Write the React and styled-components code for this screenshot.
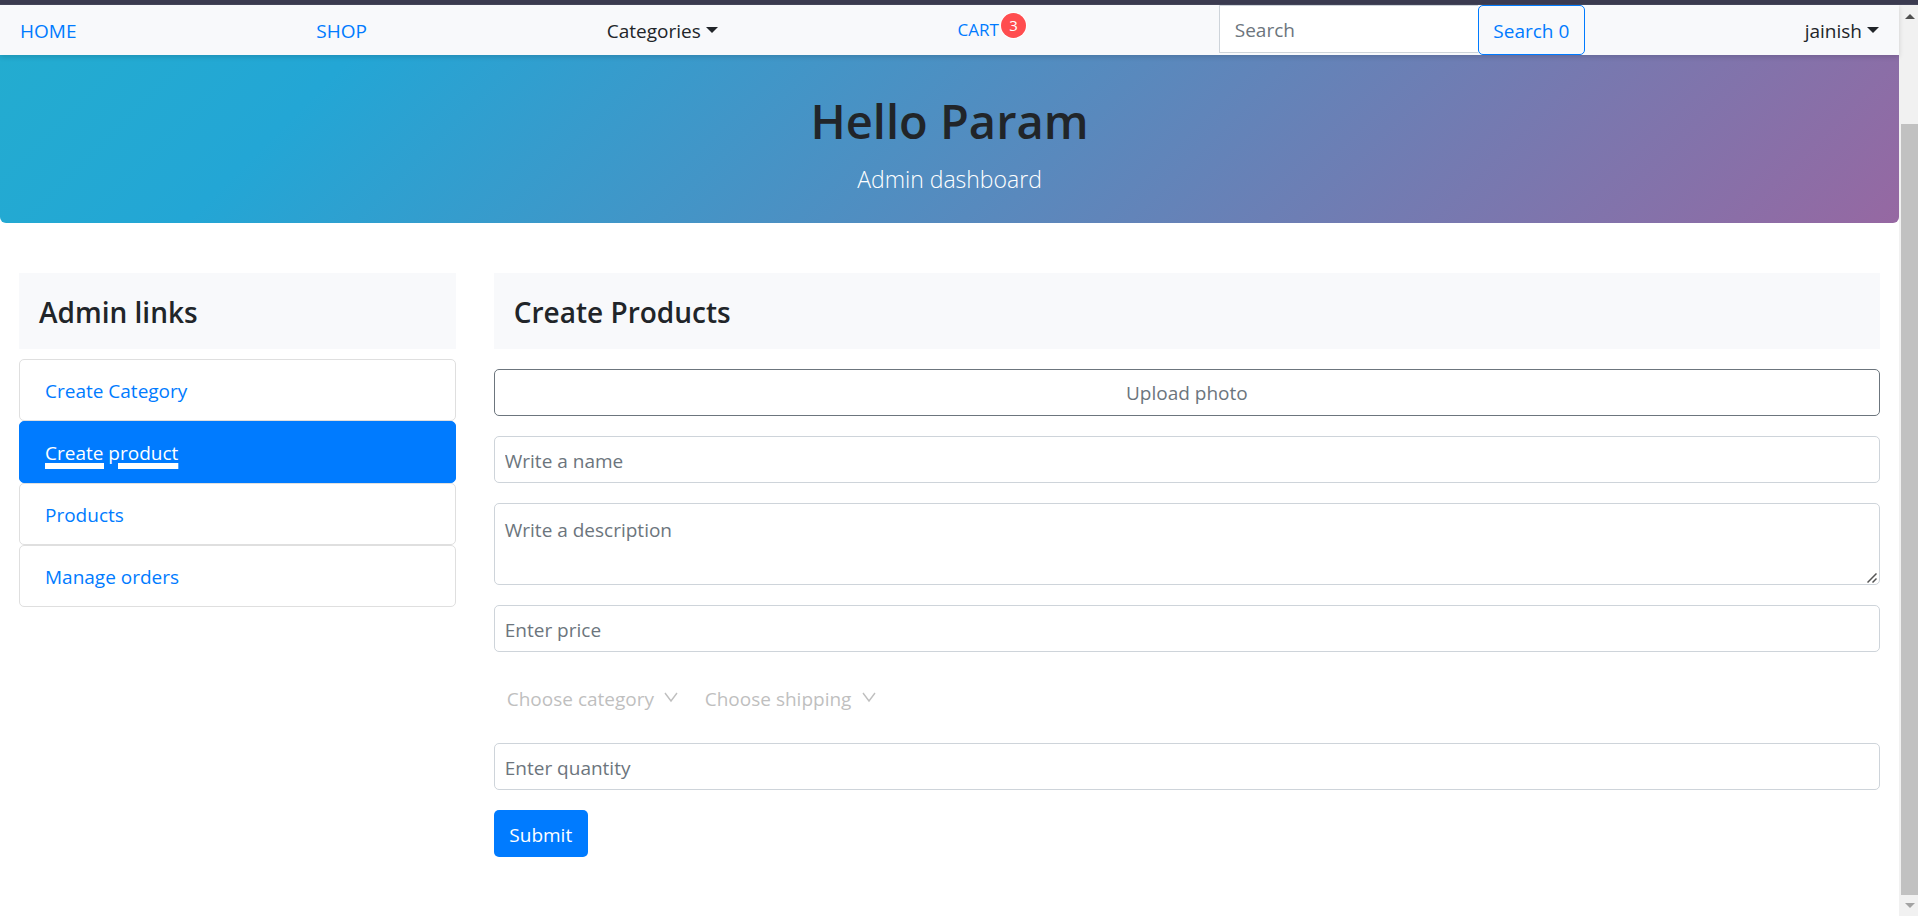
import React from "react";
import styled, { createGlobalStyle } from "styled-components";

const GlobalStyle = createGlobalStyle`
  * { box-sizing: border-box; }
  body {
    margin: 0;
    background: #fff;
    color: #212529;
    font-family: "Open Sans", "Noto Sans", sans-serif;
    font-size: 19px;
    line-height: 30px;
  }
  button, input, textarea, select { font: inherit; }
  h1, h2, p, ul { margin: 0; padding: 0; }
`;

const Shell = styled.div`
  display: flex;
  flex-direction: column;
  min-height: 100vh;
`;

const WindowEdge = styled.div`
  height: 5px;
  background: #3b3b50;
  border-bottom: 1px solid #46475c;
`;

const Viewport = styled.div`
  display: flex;
  flex: 1;
`;

const Page = styled.div`
  flex: 1;
  min-width: 0;
`;

const Nav = styled.nav`
  position: relative;
  display: flex;
  justify-content: space-between;
  height: 50px;
  background: #f8f9fb;
  box-shadow: 0 2px 5px rgba(0, 0, 0, 0.14);
`;

const NavLink = styled.a`
  display: flex;
  align-items: center;
  gap: 5px;
  padding: 2px 20px 0;
  color: ${(p) => (p.$dark ? "#212529" : "#007bff")};
  text-decoration: none;
`;

const Caret = styled.span`
  border-top: 6px solid currentColor;
  border-left: 6px solid transparent;
  border-right: 6px solid transparent;
  margin-bottom: 2px;
`;

const CartLink = styled(NavLink)`
  padding-top: 0;
  font-size: 17px;
`;

const CartLabel = styled.span`
  position: relative;
`;

const Badge = styled.sup`
  position: absolute;
  left: 100%;
  top: -2px;
  width: 25px;
  height: 25px;
  margin-left: 2px;
  border-radius: 50%;
  background: #ff4d4f;
  box-shadow: 0 0 0 1px #fff;
  color: #fff;
  font-size: 15px;
  line-height: 25px;
  text-align: center;
`;

const SearchForm = styled.form`
  display: flex;
  align-items: flex-start;
`;

const SearchInput = styled.input`
  width: 259px;
  height: 48px;
  padding: 2px 15px 0;
  border: 1px solid #ced4da;
  border-right: 0;
  border-radius: 0;
  background: #fff;
  color: #495057;
  &::placeholder { color: #6c757d; opacity: 1; }
`;

const SearchButton = styled.button`
  width: 107px;
  height: 50px;
  padding: 2px 0 0;
  border: 1px solid #007bff;
  border-radius: 5px;
  background: transparent;
  color: #007bff;
`;

const Hero = styled.header`
  height: 168px;
  padding-top: 36px;
  border-radius: 0 0 6px 6px;
  background: linear-gradient(135deg, #23acd0 0%, #23a6d5 17%, #9668a2 100%);
  text-align: center;
`;

const HeroTitle = styled.h1`
  font-size: 47px;
  font-weight: 600;
  line-height: 60px;
`;

const HeroLead = styled.p`
  margin-top: 9px;
  color: #fff;
  font-size: 23px;
  font-weight: 300;
  line-height: 38px;
`;

const Columns = styled.main`
  display: grid;
  grid-template-columns: 1fr 3fr;
  padding: 50px 0;
`;

const Column = styled.section`
  min-width: 0;
  padding: 0 19px;
`;

const CardHeader = styled.h2`
  padding: 21px 20px 19px;
  background: #f8f9fb;
  font-size: 28px;
  font-weight: 600;
  line-height: 36px;
`;

const LinkList = styled.ul`
  margin-top: 10px;
  list-style: none;
`;

const LinkItem = styled.li`
  height: 62px;
  padding: 16px 25px;
  border: 1px solid ${(p) => (p.$active ? "#007bff" : "#dfdfdf")};
  border-radius: 5px;
  background: ${(p) => (p.$active ? "#007bff" : "#fff")};
`;

const SideLink = styled.a`
  color: ${(p) => (p.$active ? "#fff" : "#007bff")};
  text-decoration: ${(p) => (p.$active ? "underline 6px" : "none")};
  text-underline-offset: 3px;
`;

const Form = styled.form`
  display: flex;
  flex-direction: column;
  gap: 20px;
  margin-top: 20px;
`;

const Upload = styled.label`
  display: block;
  height: 47px;
  padding-top: 8px;
  border: 1px solid #6c757d;
  border-radius: 5px;
  color: #6c757d;
  text-align: center;
  cursor: pointer;
  input { display: none; }
`;

const Field = styled.input`
  width: 100%;
  height: 47px;
  padding: 3px 10px 0;
  border: 1px solid #ced4da;
  border-radius: 5px;
  color: #495057;
  &::placeholder { color: #6c757d; opacity: 1; }
`;

const DescriptionBox = styled.div`
  position: relative;
`;

const Description = styled.textarea`
  display: block;
  width: 100%;
  height: 82px;
  padding: 11px 10px;
  border: 1px solid #ced4da;
  border-radius: 5px;
  color: #495057;
  resize: vertical;
  &::placeholder { color: #6c757d; opacity: 1; }
  &::-webkit-resizer { background: transparent; }
`;

const Grip = styled.svg`
  position: absolute;
  right: 3px;
  bottom: 2px;
  width: 10px;
  height: 10px;
  pointer-events: none;
`;

const SelectRow = styled.div`
  display: flex;
  height: 51px;
`;

const SelectBox = styled.div`
  position: relative;
  width: 198px;
`;

const Select = styled.select`
  appearance: none;
  width: 100%;
  height: 100%;
  padding: 2px 13px 0;
  border: 0;
  background: transparent;
  color: #bfbfbf;
`;

const Chevron = styled.svg`
  position: absolute;
  top: 20px;
  right: 14px;
  width: 14px;
  height: 11px;
  pointer-events: none;
`;

const Submit = styled.button`
  align-self: flex-start;
  width: 94px;
  height: 47px;
  padding: 3px 0 0;
  border: 0;
  border-radius: 5px;
  background: #007bff;
  color: #fff;
`;

const Scrollbar = styled.div`
  display: flex;
  flex-direction: column;
  width: 19px;
  padding-left: 2px;
  background: #f1f1f1;
`;

const ScrollArrow = styled.svg`
  flex: none;
  width: 17px;
  height: 21px;
`;

const Track = styled.div`
  display: flex;
  flex: 1;
  flex-direction: column;
  &::before { content: ""; flex: 98; }
`;

const Thumb = styled.div`
  flex: 771;
  background: #c1c1c1;
`;

const sideLinks = ["Create Category", "Create product", "Products", "Manage orders"];

function Dropdown({ label }) {
  return (
    <SelectBox>
      <Select aria-label={label} defaultValue="">
        <option value="">{label}</option>
      </Select>
      <Chevron viewBox="0 0 14 11" aria-hidden="true">
        <path d="M1 1l6 8 6-8" fill="none" stroke="#bfbfbf" strokeWidth="1.4" />
      </Chevron>
    </SelectBox>
  );
}

export default function App() {
  return (
    <Shell>
      <GlobalStyle />
      <WindowEdge />
      <Viewport>
        <Page>
          <Nav>
            <NavLink href="#home">HOME</NavLink>
            <NavLink href="#shop">SHOP</NavLink>
            <NavLink href="#categories" $dark>Categories<Caret /></NavLink>
            <CartLink href="#cart">
              <CartLabel>CART<Badge>3</Badge></CartLabel>
            </CartLink>
            <SearchForm>
              <SearchInput type="search" placeholder="Search" aria-label="Search" />
              <SearchButton type="button">Search 0</SearchButton>
            </SearchForm>
            <NavLink href="#account" $dark>jainish<Caret /></NavLink>
          </Nav>
          <Hero>
            <HeroTitle>Hello Param</HeroTitle>
            <HeroLead>Admin dashboard</HeroLead>
          </Hero>
          <Columns>
            <Column>
              <CardHeader>Admin links</CardHeader>
              <LinkList>
                {sideLinks.map((label) => {
                  const active = label === "Create product";
                  return (
                    <LinkItem key={label} $active={active}>
                      <SideLink href="#admin" $active={active}>{label}</SideLink>
                    </LinkItem>
                  );
                })}
              </LinkList>
            </Column>
            <Column>
              <CardHeader>Create Products</CardHeader>
              <Form>
                <Upload>Upload photo<input type="file" accept="image/*" /></Upload>
                <Field placeholder="Write a name" aria-label="Name" />
                <DescriptionBox>
                  <Description placeholder="Write a description" aria-label="Description" />
                  <Grip viewBox="0 0 10 10" aria-hidden="true">
                    <path d="M0.500 9.500L9.500 0.500M5.500 9.500L9.500 5.500" fill="none" stroke="#555" strokeWidth="1.500" />
                  </Grip>
                </DescriptionBox>
                <Field placeholder="Enter price" aria-label="Price" />
                <SelectRow>
                  <Dropdown label="Choose category" />
                  <Dropdown label="Choose shipping" />
                </SelectRow>
                <Field placeholder="Enter quantity" aria-label="Quantity" />
                <Submit type="button">Submit</Submit>
              </Form>
            </Column>
          </Columns>
        </Page>
        <Scrollbar aria-hidden="true">
          <ScrollArrow viewBox="0 0 17 21"><path d="M4 14l5-5 5 5z" fill="#505050" /></ScrollArrow>
          <Track><Thumb /></Track>
          <ScrollArrow viewBox="0 0 17 21"><path d="M4 8h10l-5 5z" fill="#a3a3a3" /></ScrollArrow>
        </Scrollbar>
      </Viewport>
    </Shell>
  );
}
